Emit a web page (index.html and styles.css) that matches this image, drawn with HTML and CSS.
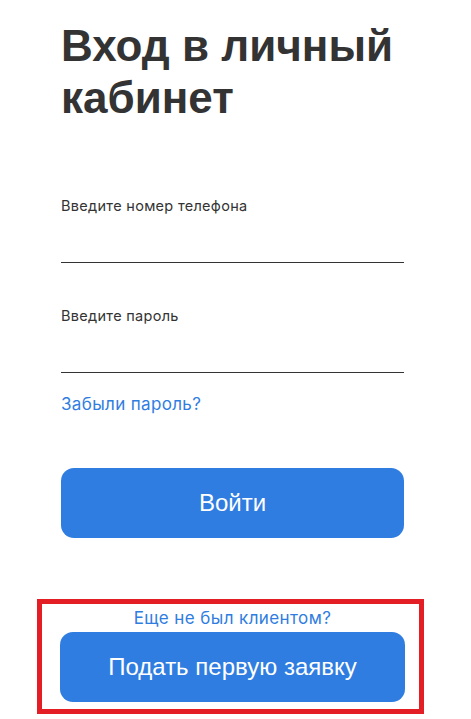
FILE: index.html
```html
<!DOCTYPE html>
<html lang="ru">
<head>
<meta charset="utf-8">
<title>Вход в личный кабинет</title>
<link rel="stylesheet" href="styles.css">
</head>
<body>
<main class="login">
  <h1 class="login__title">Вход в личный кабинет</h1>
  <form class="login__form">
    <label class="field">
      <span class="field__label">Введите номер телефона</span>
      <input class="field__input" type="tel">
    </label>
    <label class="field field--second">
      <span class="field__label">Введите пароль</span>
      <input class="field__input" type="password">
    </label>
    <a class="login__forgot" href="#">Забыли пароль?</a>
    <button class="btn btn--login" type="button">Войти</button>
  </form>
  <section class="newclient">
    <a class="newclient__hint" href="#">Еще не был клиентом?</a>
    <button class="btn btn--apply" type="button">Подать первую заявку</button>
  </section>
</main>
</body>
</html>
```

FILE: styles.css
```css
* { box-sizing: border-box; }
html, body { margin: 0; padding: 0; background: #ffffff; }
body {
  font-family: "Liberation Sans", Arial, sans-serif;
  color: #333333;
}
.login {
  width: 343px;
  margin: 0 0 0 61px;
  padding-top: 20px;
  display: flex;
  flex-direction: column;
}
.login__title {
  margin: 0;
  font-size: 44px;
  line-height: 52px;
  font-weight: 700;
  color: #333333;
}
.login__form {
  display: flex;
  flex-direction: column;
  margin-top: 72px;
}
.field {
  display: flex;
  flex-direction: column;
}
.field--second { margin-top: 43px; }
.field__label {
  font-family: Inter, "Liberation Sans", sans-serif;
  font-size: 14.5px;
  letter-spacing: 0.3px;
  line-height: 20px;
  color: #333333;
}
.field__input {
  height: 47px;
  border: 0;
  border-bottom: 1px solid #333333;
  background: transparent;
  outline: none;
  padding: 0;
  font: inherit;
}
.login__forgot {
  margin-top: 21px;
  font-family: Inter, "Liberation Sans", sans-serif;
  font-size: 17px;
  letter-spacing: 0.35px;
  line-height: 20px;
  color: #2f7de1;
  text-decoration: none;
  align-self: flex-start;
}
.btn {
  display: flex;
  align-items: center;
  justify-content: center;
  width: 100%;
  height: 70px;
  border: 0;
  border-radius: 13px;
  background: #2f7de1;
  color: #ffffff;
  font-family: "Liberation Sans", Arial, sans-serif;
  font-size: 24px;
  cursor: pointer;
}
.btn--login { margin-top: 54px; }
.newclient {
  margin: 61px -20px 0 -24px;
  padding: 4px 14px 7px 18px;
  border: 5px solid #e31e24;
  display: flex;
  flex-direction: column;
  align-items: center;
}
.newclient__hint {
  font-family: Inter, "Liberation Sans", sans-serif;
  font-size: 17px;
  letter-spacing: 0.4px;
  line-height: 20px;
  color: #2f7de1;
  text-decoration: none;
}
.btn--apply { margin-top: 4px; font-size: 24px; }
```
